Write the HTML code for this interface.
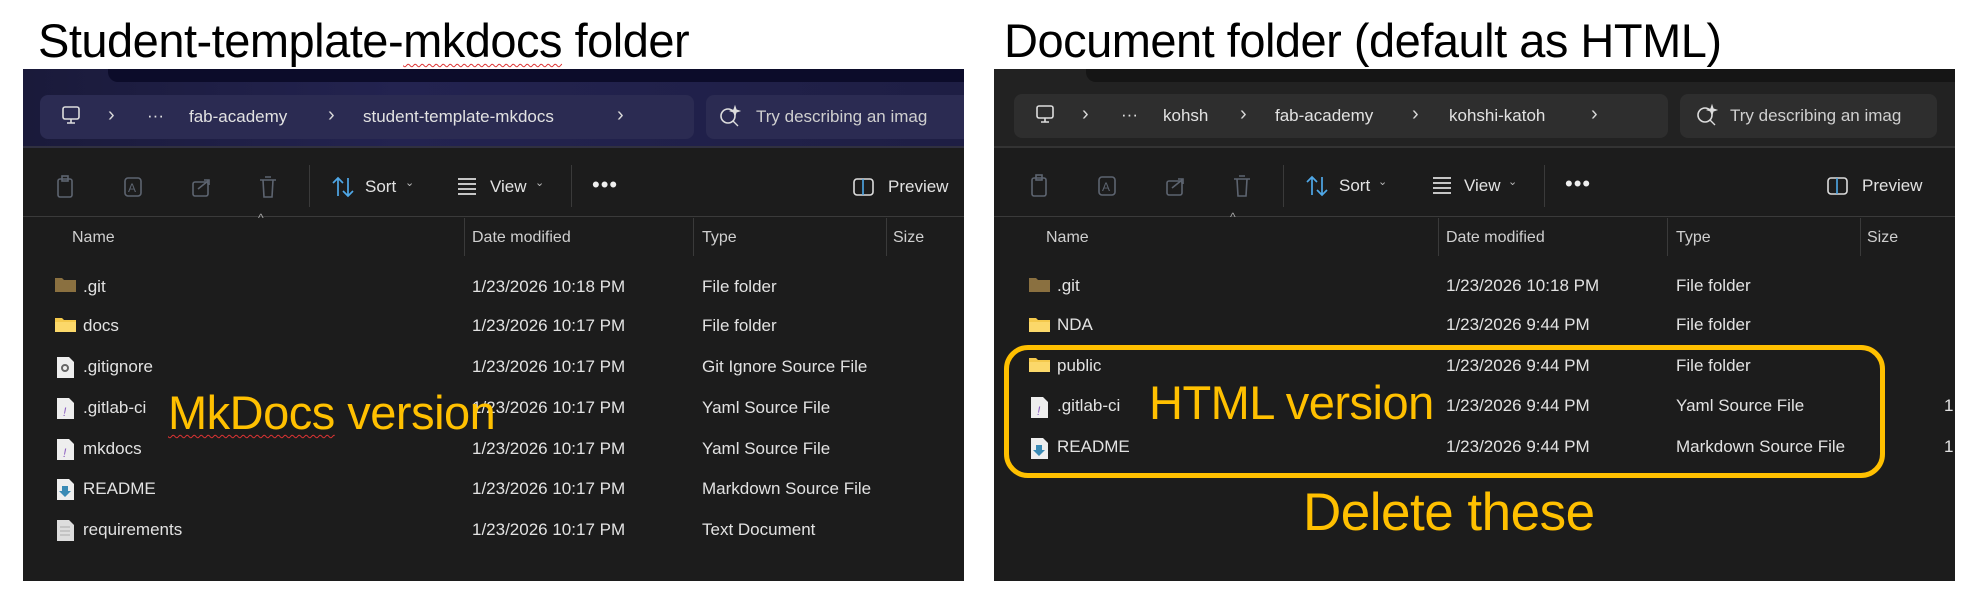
<!DOCTYPE html>
<html><head><meta charset="utf-8"><style>
*{margin:0;padding:0;box-sizing:border-box}
body{width:1975px;height:604px;background:#fff;position:relative;overflow:hidden;font-family:"Liberation Sans",sans-serif}
.a{position:absolute;white-space:nowrap}
.t{font-size:17px;color:#e2e2e2;line-height:20px}
.h{font-size:16px;color:#cfcfcf;line-height:20px}
.title{font-size:47px;color:#000;line-height:52px;letter-spacing:-0.5px}
.gold{color:#ffc000;font-size:47px;line-height:52px;letter-spacing:-0.5px}
.panel{position:absolute;background:#1c1c1c;overflow:hidden}
.box{position:absolute;border-radius:8px}
.chev{font-size:20px;color:#d8d8d8}
.div{position:absolute;width:1px;background:#3a3a3a}
.dim{stroke:#5d6470;fill:none;stroke-width:1.6}
</style></head><body>

<div class="a title" style="left:38px;top:15px">Student-template-<span style="text-decoration:underline wavy #d33;text-decoration-thickness:1px;text-underline-offset:6px">mkdocs</span> folder</div>
<div class="a title" style="left:1004px;top:15px">Document folder (default as HTML)</div>

<!-- LEFT PANEL -->
<div class="panel" style="left:23px;top:69px;width:941px;height:512px">
  <div class="a" style="left:0;top:0;width:941px;height:78px;background:linear-gradient(90deg,#1a1a3a,#232350 40%,#1e1e44)"></div>
  <div class="a" style="left:85px;top:0;width:856px;height:13px;background:#0c0c2a;border-radius:0 0 0 10px"></div>
  <div class="box" style="left:17px;top:26px;width:654px;height:44px;background:#2b2b52"></div>
  <div class="box" style="left:683px;top:26px;width:270px;height:44px;background:#2b2b52"></div>
  <div class="a" style="left:0;top:77px;width:941px;height:2px;background:#303040"></div>
  <div class="a" style="left:0;top:147px;width:941px;height:1px;background:#3a3a3a"></div>
</div>
<svg class="a" style="left:60px;top:104px" width="24" height="24"><rect x="3" y="3" width="16" height="12" rx="2" fill="none" stroke="#ddd" stroke-width="1.6"/><path d="M7 19h8M11 15v4" stroke="#ddd" stroke-width="1.6"/></svg>
<div class="a chev" style="left:108px;top:104px">›</div>
<div class="a t" style="left:147px;top:106px">···</div>
<div class="a t" style="left:189px;top:107px">fab-academy</div>
<div class="a chev" style="left:328px;top:104px">›</div>
<div class="a t" style="left:363px;top:107px">student-template-mkdocs</div>
<div class="a chev" style="left:617px;top:104px">›</div>
<svg class="a" style="left:718px;top:104px" width="24" height="24"><circle cx="10" cy="12" r="7" fill="none" stroke="#ddd" stroke-width="1.6"/><path d="M15 17l5 5M17 3l1 3 3 1-3 1-1 3-1-3-3-1 3-1z" stroke="#ddd" stroke-width="1.4" fill="#ddd"/></svg>
<div class="a t" style="left:756px;top:107px;color:#cfcfcf">Try describing an imag</div>

<!-- left toolbar -->
<svg class="a" style="left:55px;top:174px" width="240" height="26">
<rect x="3" y="5" width="14" height="18" rx="2" class="dim"/><rect x="7" y="2" width="6" height="5" class="dim"/>
<rect x="70" y="4" width="16" height="18" rx="3" class="dim"/><text x="73" y="18" font-size="12" fill="#5d6470" font-family="Liberation Sans">A</text>
<rect x="138" y="8" width="15" height="14" rx="2" class="dim"/><path d="M143 15l10-8M149 6h5v5" class="dim"/>
<path d="M205 6h16M208 6l1 17h8l1-17M210 3h6" class="dim"/>
</svg>
<div class="div" style="left:309px;top:165px;height:42px"></div>
<svg class="a" style="left:331px;top:174px" width="26" height="26"><path d="M7 22V4M2 9l5-5 5 5M17 4v18M12 17l5 5 5-5" stroke="#4fa8e8" stroke-width="1.7" fill="none"/></svg>
<div class="a t" style="left:365px;top:177px">Sort</div>
<div class="a" style="left:405px;top:176px;font-size:11px;color:#bbb">⌄</div>
<svg class="a" style="left:456px;top:176px" width="24" height="20"><path d="M2 3h18M2 8h18M2 13h18M2 18h18" stroke="#ddd" stroke-width="1.7"/></svg>
<div class="a t" style="left:490px;top:177px">View</div>
<div class="a" style="left:535px;top:176px;font-size:11px;color:#bbb">⌄</div>
<div class="div" style="left:571px;top:165px;height:42px"></div>
<div class="a" style="left:592px;top:172px;font-size:22px;color:#eee;letter-spacing:1px">•••</div>
<svg class="a" style="left:852px;top:176px" width="24" height="22"><rect x="2" y="3" width="19" height="16" rx="3" fill="none" stroke="#ddd" stroke-width="1.6"/><path d="M11 3v16" stroke="#4fa8e8" stroke-width="1.6"/></svg>
<div class="a t" style="left:888px;top:177px">Preview</div>

<!-- left header -->
<div class="a" style="left:258px;top:211px;font-size:12px;color:#aaa">^</div>
<div class="a h" style="left:72px;top:228px">Name</div>
<div class="div" style="left:464px;top:218px;height:38px"></div>
<div class="a h" style="left:472px;top:228px">Date modified</div>
<div class="div" style="left:693px;top:218px;height:38px"></div>
<div class="a h" style="left:702px;top:228px">Type</div>
<div class="div" style="left:886px;top:218px;height:38px"></div>
<div class="a h" style="left:893px;top:228px">Size</div>

<!-- left rows -->
<svg class="a" style="left:55px;top:275px" width="22" height="270">
<path d="M0 3h7l2 2h12v12H0z" fill="#8a7040"/>
<path d="M0 43h7l2 2h12v12H0z" fill="#f4c94c"/><path d="M0 47h21v10H0z" fill="#fbd86a"/>
<path d="M2 82h12l5 5v16H2z" fill="#eee"/><circle cx="10" cy="93" r="3" fill="none" stroke="#666" stroke-width="2"/>
<path d="M2 123h12l5 5v16H2z" fill="#eee"/><text x="8" y="141" font-size="12" fill="#8a5bc0" font-style="italic">!</text>
<path d="M2 164h12l5 5v16H2z" fill="#eee"/><text x="8" y="182" font-size="12" fill="#8a5bc0" font-style="italic">!</text>
<path d="M2 204h12l5 5v16H2z" fill="#eee"/><path d="M7 211h6v5h3l-6 6-6-6h3z" fill="#3a8ab5"/>
<path d="M2 245h12l5 5v16H2z" fill="#ddd"/><path d="M5 252h10M5 256h10M5 260h10" stroke="#aaa"/>
</svg>
<div class="a t" style="left:83px;top:277px">.git</div>
<div class="a t" style="left:83px;top:316px">docs</div>
<div class="a t" style="left:83px;top:357px">.gitignore</div>
<div class="a t" style="left:83px;top:398px">.gitlab-ci</div>
<div class="a t" style="left:83px;top:439px">mkdocs</div>
<div class="a t" style="left:83px;top:479px">README</div>
<div class="a t" style="left:83px;top:520px">requirements</div>
<div class="a t" style="left:472px;top:277px">1/23/2026 10:18 PM</div>
<div class="a t" style="left:472px;top:316px">1/23/2026 10:17 PM</div>
<div class="a t" style="left:472px;top:357px">1/23/2026 10:17 PM</div>
<div class="a t" style="left:472px;top:398px">1/23/2026 10:17 PM</div>
<div class="a t" style="left:472px;top:439px">1/23/2026 10:17 PM</div>
<div class="a t" style="left:472px;top:479px">1/23/2026 10:17 PM</div>
<div class="a t" style="left:472px;top:520px">1/23/2026 10:17 PM</div>
<div class="a t" style="left:702px;top:277px">File folder</div>
<div class="a t" style="left:702px;top:316px">File folder</div>
<div class="a t" style="left:702px;top:357px">Git Ignore Source File</div>
<div class="a t" style="left:702px;top:398px">Yaml Source File</div>
<div class="a t" style="left:702px;top:439px">Yaml Source File</div>
<div class="a t" style="left:702px;top:479px">Markdown Source File</div>
<div class="a t" style="left:702px;top:520px">Text Document</div>
<div class="a gold" style="left:168px;top:387px"><span style="text-decoration:underline wavy #d33;text-decoration-thickness:1px;text-underline-offset:5px">MkDocs</span> version</div>

<!-- RIGHT PANEL -->
<div class="panel" style="left:994px;top:69px;width:961px;height:512px">
  <div class="a" style="left:0;top:0;width:961px;height:78px;background:#222"></div>
  <div class="a" style="left:92px;top:0;width:869px;height:13px;background:#151515;border-radius:0 0 0 10px"></div>
  <div class="box" style="left:20px;top:25px;width:654px;height:44px;background:#2e2e2e"></div>
  <div class="box" style="left:686px;top:25px;width:257px;height:44px;background:#2e2e2e"></div>
  <div class="a" style="left:0;top:77px;width:961px;height:2px;background:#333"></div>
  <div class="a" style="left:0;top:147px;width:961px;height:1px;background:#3a3a3a"></div>
</div>
<svg class="a" style="left:1034px;top:103px" width="24" height="24"><rect x="3" y="3" width="16" height="12" rx="2" fill="none" stroke="#ddd" stroke-width="1.6"/><path d="M7 19h8M11 15v4" stroke="#ddd" stroke-width="1.6"/></svg>
<div class="a chev" style="left:1082px;top:103px">›</div>
<div class="a t" style="left:1121px;top:105px">···</div>
<div class="a t" style="left:1163px;top:106px">kohsh</div>
<div class="a chev" style="left:1240px;top:103px">›</div>
<div class="a t" style="left:1275px;top:106px">fab-academy</div>
<div class="a chev" style="left:1412px;top:103px">›</div>
<div class="a t" style="left:1449px;top:106px">kohshi-katoh</div>
<div class="a chev" style="left:1591px;top:103px">›</div>
<svg class="a" style="left:1695px;top:103px" width="24" height="24"><circle cx="10" cy="12" r="7" fill="none" stroke="#ddd" stroke-width="1.6"/><path d="M15 17l5 5M17 3l1 3 3 1-3 1-1 3-1-3-3-1 3-1z" stroke="#ddd" stroke-width="1.4" fill="#ddd"/></svg>
<div class="a t" style="left:1730px;top:106px;color:#cfcfcf">Try describing an imag</div>

<svg class="a" style="left:1029px;top:173px" width="240" height="26">
<rect x="3" y="5" width="14" height="18" rx="2" class="dim"/><rect x="7" y="2" width="6" height="5" class="dim"/>
<rect x="70" y="4" width="16" height="18" rx="3" class="dim"/><text x="73" y="18" font-size="12" fill="#5d6470" font-family="Liberation Sans">A</text>
<rect x="138" y="8" width="15" height="14" rx="2" class="dim"/><path d="M143 15l10-8M149 6h5v5" class="dim"/>
<path d="M205 6h16M208 6l1 17h8l1-17M210 3h6" class="dim"/>
</svg>
<div class="div" style="left:1283px;top:165px;height:42px"></div>
<svg class="a" style="left:1305px;top:173px" width="26" height="26"><path d="M7 22V4M2 9l5-5 5 5M17 4v18M12 17l5 5 5-5" stroke="#4fa8e8" stroke-width="1.7" fill="none"/></svg>
<div class="a t" style="left:1339px;top:176px">Sort</div>
<div class="a" style="left:1378px;top:175px;font-size:11px;color:#bbb">⌄</div>
<svg class="a" style="left:1431px;top:175px" width="24" height="20"><path d="M2 3h18M2 8h18M2 13h18M2 18h18" stroke="#ddd" stroke-width="1.7"/></svg>
<div class="a t" style="left:1464px;top:176px">View</div>
<div class="a" style="left:1508px;top:175px;font-size:11px;color:#bbb">⌄</div>
<div class="div" style="left:1544px;top:165px;height:42px"></div>
<div class="a" style="left:1565px;top:171px;font-size:22px;color:#eee;letter-spacing:1px">•••</div>
<svg class="a" style="left:1826px;top:175px" width="24" height="22"><rect x="2" y="3" width="19" height="16" rx="3" fill="none" stroke="#ddd" stroke-width="1.6"/><path d="M11 3v16" stroke="#4fa8e8" stroke-width="1.6"/></svg>
<div class="a t" style="left:1862px;top:176px">Preview</div>

<div class="a" style="left:1230px;top:210px;font-size:12px;color:#aaa">^</div>
<div class="a h" style="left:1046px;top:228px">Name</div>
<div class="div" style="left:1438px;top:218px;height:38px"></div>
<div class="a h" style="left:1446px;top:228px">Date modified</div>
<div class="div" style="left:1667px;top:218px;height:38px"></div>
<div class="a h" style="left:1676px;top:228px">Type</div>
<div class="div" style="left:1860px;top:218px;height:38px"></div>
<div class="a h" style="left:1867px;top:228px">Size</div>

<svg class="a" style="left:1029px;top:275px" width="22" height="190">
<path d="M0 3h7l2 2h12v12H0z" fill="#8a7040"/>
<path d="M0 43h7l2 2h12v12H0z" fill="#f4c94c"/><path d="M0 47h21v10H0z" fill="#fbd86a"/>
<path d="M0 83h7l2 2h12v12H0z" fill="#f4c94c"/><path d="M0 87h21v10H0z" fill="#fbd86a"/>
<path d="M2 122h12l5 5v16H2z" fill="#eee"/><text x="8" y="140" font-size="12" fill="#8a5bc0" font-style="italic">!</text>
<path d="M2 163h12l5 5v16H2z" fill="#eee"/><path d="M7 170h6v5h3l-6 6-6-6h3z" fill="#3a8ab5"/>
</svg>
<div class="a t" style="left:1057px;top:276px">.git</div>
<div class="a t" style="left:1057px;top:315px">NDA</div>
<div class="a t" style="left:1057px;top:356px">public</div>
<div class="a t" style="left:1057px;top:396px">.gitlab-ci</div>
<div class="a t" style="left:1057px;top:437px">README</div>
<div class="a t" style="left:1446px;top:276px">1/23/2026 10:18 PM</div>
<div class="a t" style="left:1446px;top:315px">1/23/2026 9:44 PM</div>
<div class="a t" style="left:1446px;top:356px">1/23/2026 9:44 PM</div>
<div class="a t" style="left:1446px;top:396px">1/23/2026 9:44 PM</div>
<div class="a t" style="left:1446px;top:437px">1/23/2026 9:44 PM</div>
<div class="a t" style="left:1676px;top:276px">File folder</div>
<div class="a t" style="left:1676px;top:315px">File folder</div>
<div class="a t" style="left:1676px;top:356px">File folder</div>
<div class="a t" style="left:1676px;top:396px">Yaml Source File</div>
<div class="a t" style="left:1676px;top:437px">Markdown Source File</div>
<div class="a t" style="left:1944px;top:396px">1</div>
<div class="a t" style="left:1944px;top:437px">1</div>

<div class="a" style="left:1004px;top:345px;width:881px;height:133px;border:5px solid #ffc000;border-radius:24px"></div>
<div class="a gold" style="left:1149px;top:377px">HTML version</div>
<div class="a gold" style="left:1303px;top:484px;font-size:53px;line-height:58px">Delete these</div>
</body></html>
